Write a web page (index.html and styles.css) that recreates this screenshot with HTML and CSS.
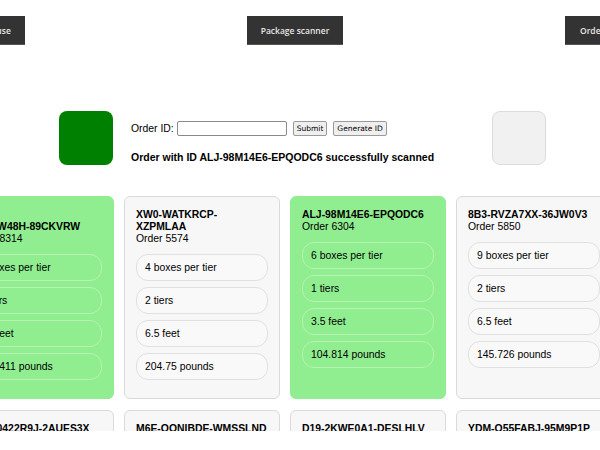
FILE: index.html
```html
<!DOCTYPE html>
<html>
<head>
<meta charset="utf-8">
<link rel="stylesheet" href="styles.css">
</head>
<body>
<nav class="nav">
  <button class="nav-btn nav-left">Warehouse</button>
  <button class="nav-btn nav-center">Package scanner</button>
  <button class="nav-btn">Orders</button>
</nav>

<section class="scanner">
  <div class="status status-ok"></div>
  <div class="scan-form">
    <div class="form-row">
      <label class="label">Order ID:</label>
      <input class="id-input" type="text">
      <button class="small-btn">Submit</button>
      <button class="small-btn">Generate ID</button>
    </div>
    <p class="message">Order with ID ALJ-98M14E6-EPQODC6 successfully scanned</p>
  </div>
  <div class="status status-idle"></div>
</section>

<div class="board-clip">
<div class="board">
  <div class="card card-done">
    <div class="card-title">K5T-<span class="nowrap">MWMW48H-89CKVRW</span></div>
    <div class="card-order">Order 8314</div>
    <div class="pill pill-first">5 boxes per tier</div>
    <div class="pill">2 tiers</div>
    <div class="pill">4.5 feet</div>
    <div class="pill">158.411 pounds</div>
  </div>
  <div class="card">
    <div class="card-title">XW0-WATKRCP-XZPMLAA</div>
    <div class="card-order">Order 5574</div>
    <div class="pill pill-first">4 boxes per tier</div>
    <div class="pill">2 tiers</div>
    <div class="pill">6.5 feet</div>
    <div class="pill">204.75 pounds</div>
  </div>
  <div class="card card-done">
    <div class="card-title">ALJ-98M14E6-EPQODC6</div>
    <div class="card-order">Order 6304</div>
    <div class="pill pill-first">6 boxes per tier</div>
    <div class="pill">1 tiers</div>
    <div class="pill">3.5 feet</div>
    <div class="pill">104.814 pounds</div>
  </div>
  <div class="card">
    <div class="card-title">8B3-RVZA7XX-36JW0V3</div>
    <div class="card-order">Order 5850</div>
    <div class="pill pill-first">9 boxes per tier</div>
    <div class="pill">2 tiers</div>
    <div class="pill">6.5 feet</div>
    <div class="pill">145.726 pounds</div>
  </div>
  <div class="card">
    <div class="card-title">W8N-0422R9J-2AUES3X</div>
    <div class="card-order">Order 4127</div>
    <div class="pill pill-first">3 boxes per tier</div>
    <div class="pill">2 tiers</div>
    <div class="pill">5 feet</div>
    <div class="pill">98.2 pounds</div>
  </div>
  <div class="card">
    <div class="card-title">M6E-OONIBDE-WMSSLND</div>
    <div class="card-order">Order 7031</div>
    <div class="pill pill-first">7 boxes per tier</div>
    <div class="pill">3 tiers</div>
    <div class="pill">4 feet</div>
    <div class="pill">120.5 pounds</div>
  </div>
  <div class="card">
    <div class="card-title">D19-2KWE0A1-DESLHLV</div>
    <div class="card-order">Order 2290</div>
    <div class="pill pill-first">2 boxes per tier</div>
    <div class="pill">1 tiers</div>
    <div class="pill">2.5 feet</div>
    <div class="pill">60.3 pounds</div>
  </div>
  <div class="card">
    <div class="card-title">YDM-Q55FABJ-95M9P1P</div>
    <div class="card-order">Order 6612</div>
    <div class="pill pill-first">8 boxes per tier</div>
    <div class="pill">2 tiers</div>
    <div class="pill">5.5 feet</div>
    <div class="pill">176.9 pounds</div>
  </div>
</div>
</div>
</body>
</html>
```

FILE: styles.css
```css
html, body {
  margin: 0;
  padding: 0;
  background: #ffffff;
  overflow: hidden;
}

body {
  font-family: "Liberation Sans", Arial, sans-serif;
  font-size: 10.4px;
  color: #000;
  width: 600px;
  height: 450px;
}

/* top navigation */
.nav {
  display: flex;
  align-items: center;
  gap: 222px;
  padding-top: 16px;
  margin-left: -50px;
  width: max-content;
}

.nav-btn {
  height: 29px;
  padding: 0 15px;
  background: #333333;
  color: #e6e6e6;
  border: none;
  border-bottom: 1px solid #555;
  font-family: "Open Sans", "DejaVu Sans", sans-serif;
  font-size: 8.5px;
  font-weight: 600;
  white-space: nowrap;
}

.nav-center {
  width: 96px;
  padding: 0;
}

.nav-left {
  width: 75px;
  padding: 0;
}

/* scanner area */
.scanner {
  display: flex;
  align-items: flex-start;
  margin-top: 66px;
  margin-left: 59px;
}

.status {
  width: 54px;
  height: 54px;
  border-radius: 8px;
  box-sizing: border-box;
  flex: none;
}

.status-ok {
  background: #008000;
}

.status-idle {
  background: #f1f1f1;
  border: 1px solid #dcdcdc;
}

.scan-form {
  width: 343px;
  margin: 0 18px;
  padding-top: 10px;
}

.form-row {
  display: flex;
  align-items: center;
  height: 15px;
}

.label {
  font-size: 10.4px;
  margin-right: 3px;
}

.id-input {
  width: 110px;
  height: 15px;
  box-sizing: border-box;
  border: 1px solid #8a8a8a;
  border-radius: 2px;
  padding: 0 2px;
  margin: 0 6px 0 0;
  font-size: 9px;
}

.small-btn {
  height: 15px;
  box-sizing: border-box;
  padding: 0 3px;
  margin: 0 6px 0 0;
  background: #efefef;
  border: 1px solid #9a9a9a;
  border-radius: 2px;
  font-family: "DejaVu Sans", "Open Sans", sans-serif;
  font-size: 7.5px;
  color: #000;
  line-height: 13px;
}

.message {
  margin: 15px 0 0 0;
  font-weight: bold;
  font-size: 10.5px;
  line-height: 12px;
}

/* card board */
.board-clip {
  margin-top: 31px;
  height: 235px;
  overflow: hidden;
}

.board {
  display: grid;
  grid-template-columns: repeat(4, 156px);
  column-gap: 10px;
  row-gap: 11px;
  margin-left: -42px;
  width: max-content;
}

.card {
  box-sizing: border-box;
  background: #f7f7f7;
  border: 1px solid #dadada;
  border-radius: 6px;
  padding: 12px 11px 18px 11px;
  display: flex;
  flex-direction: column;
  gap: 6px;
}

.card-done {
  background: #90ee90;
  border-color: #90ee90;
}

.card-title {
  font-weight: bold;
  font-size: 10.4px;
  line-height: 12px;
  max-width: 130.5px;
  margin-bottom: -6px;
}

.nowrap {
  white-space: nowrap;
}

.card-order {
  font-size: 10.4px;
  line-height: 12px;
}

.pill-first {
  margin-top: 3px;
}

.pill {
  box-sizing: border-box;
  height: 27px;
  flex: none;
  display: flex;
  align-items: center;
  padding: 0 8px;
  border: 1px solid #e0e0e0;
  border-radius: 12px;
  background: rgba(255, 255, 255, 0.25);
  font-size: 10.4px;
}

.card-done .pill {
  border-color: #b9f2b3;
  background: transparent;
}
```
